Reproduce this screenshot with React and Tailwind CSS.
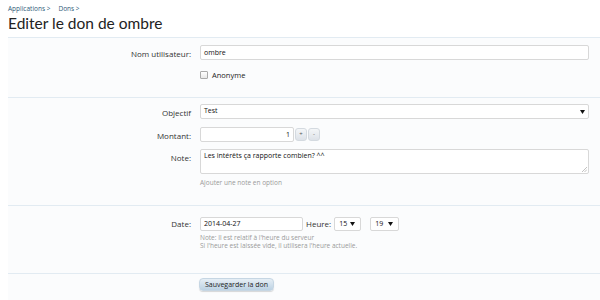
import React from "react";

const Arrow = () => (
  <svg width="5" height="4" viewBox="0 0 5 4" className="shrink-0">
    <path d="M0 0H5L2.5 4Z" fill="#111" />
  </svg>
);

function Row({ label, children, labelTop = "pt-[3px]" }) {
  return (
    <div className="flex">
      <div className={`w-[184px] text-right pr-[1px] text-[8px] text-[#333] ${labelTop}`}>{label}</div>
      <div className="ml-[8px] flex-1">{children}</div>
    </div>
  );
}

export default function App() {
  return (
    <div
      className="w-[600px] h-[300px] overflow-hidden bg-white"
      style={{ fontFamily: '"Open Sans", "Noto Sans", sans-serif' }}
    >
      <div className="pl-[8px] pt-[4px] h-[12px] flex gap-[8px] text-[6.5px] text-[#2d5a78]">
        <span>Applications &gt;</span>
        <span>Dons &gt;</span>
      </div>
      <h1
        className="pl-[8px] h-[25px] text-[15.5px] leading-[23px] text-[#222]"
        style={{ fontFamily: 'Lato, "Open Sans", sans-serif' }}
      >
        Editer le don de ombre
      </h1>

      <div className="ml-[8px] bg-[#fbfcfd]">
        {/* Section 1 */}
        <div className="border-t border-[#e2ebf2] pt-[7px] h-[60px]">
          <Row label="Nom utilisateur:">
            <div className="w-[389px] h-[15px] bg-white border border-[#d8d8d8] rounded-[2px] text-[7px] leading-[13px] pl-[3px] text-[#111]">
              ombre
            </div>
          </Row>
          <div className="ml-[192px] mt-[9px] flex items-center gap-[4px]">
            <div className="w-[8px] h-[8px] border border-[#aaa] rounded-[1px] bg-gradient-to-b from-white to-[#e8e8e8]" />
            <span className="text-[7.5px] text-[#222] mt-[1px]">Anonyme</span>
          </div>
        </div>

        {/* Section 2 */}
        <div className="border-t border-[#e2ebf2] pt-[6px] h-[108px]">
          <Row label="Objectif">
            <div className="w-[389px] h-[15px] bg-white border border-[#d8d8d8] rounded-[2px] flex items-center justify-between pl-[3px] pr-[3px] text-[7px] text-[#111]">
              <span>Test</span>
              <Arrow />
            </div>
          </Row>
          <div className="mt-[8px]">
            <Row label="Montant:">
              <div className="flex items-center gap-[1px]">
                <div className="w-[94px] h-[15px] bg-white border border-[#d8d8d8] rounded-[2px] text-right pr-[3px] text-[7px] leading-[13px] text-[#111]">
                  1
                </div>
                <div className="w-[12px] h-[13px] rounded-[3px] bg-gradient-to-b from-[#f4f6f8] to-[#dde2e8] border border-[#d4dae0] text-[6px] leading-[11px] text-center text-[#555]">+</div>
                <div className="w-[12px] h-[13px] rounded-[3px] bg-gradient-to-b from-[#f4f6f8] to-[#dde2e8] border border-[#d4dae0] text-[6px] leading-[11px] text-center text-[#555]">-</div>
              </div>
            </Row>
          </div>
          <div className="mt-[7px]">
            <Row label="Note:">
              <div className="relative w-[389px] h-[25px] bg-white border border-[#d8d8d8] rounded-[2px] text-[7px] leading-[12px] pl-[3px] text-[#111]">
                Les intérêts ça rapporte combien? ^^
                <svg width="5" height="5" viewBox="0 0 5 5" className="absolute right-[1px] bottom-[1px]">
                  <path d="M5 0L0 5M5 2.5L2.5 5" stroke="#999" strokeWidth="0.6" />
                </svg>
              </div>
              <div className="mt-[4px] text-[6.5px] text-[#9a9a9a]">Ajouter une note en option</div>
            </Row>
          </div>
        </div>

        {/* Section 3 */}
        <div className="border-t border-[#e2ebf2] pt-[11px] h-[68px]">
          <Row label="Date:" labelTop="pt-[1px]">
            <div className="flex items-center">
              <div className="w-[103px] h-[14px] bg-white border border-[#d8d8d8] rounded-[2px] text-[7px] leading-[12px] pl-[3px] text-[#111]">
                2014-04-27
              </div>
              <span className="ml-[3px] text-[8px] text-[#333]">Heure:</span>
              <div className="ml-[3px] w-[27px] h-[14px] bg-white border border-[#d8d8d8] rounded-[2px] flex items-center justify-between pl-[4px] pr-[5px] text-[7px] text-[#111]">
                <span>15</span>
                <Arrow />
              </div>
              <div className="ml-[9px] w-[29px] h-[14px] bg-white border border-[#d8d8d8] rounded-[2px] flex items-center justify-between pl-[4px] pr-[5px] text-[7px] text-[#111]">
                <span>19</span>
                <Arrow />
              </div>
            </div>
            <div className="mt-[3px] text-[6.5px] leading-[8px] text-[#9a9a9a]">
              <div>Note: Il est relatif à l'heure du serveur</div>
              <div>Si l'heure est laissée vide, il utilisera l'heure actuelle.</div>
            </div>
          </Row>
        </div>

        {/* Section 4 */}
        <div className="border-t border-[#e2ebf2] pt-[4px] h-[30px]">
          <div className="ml-[191px] w-[75px] h-[13px] rounded-[4px] bg-gradient-to-b from-[#e6eef5] to-[#bcd2e3] border border-[#c6d6e3] shadow-[0_1px_1px_rgba(0,0,0,0.15)] text-[7px] leading-[11px] text-center text-[#222]">
            Sauvegarder la don
          </div>
        </div>
      </div>
    </div>
  );
}
